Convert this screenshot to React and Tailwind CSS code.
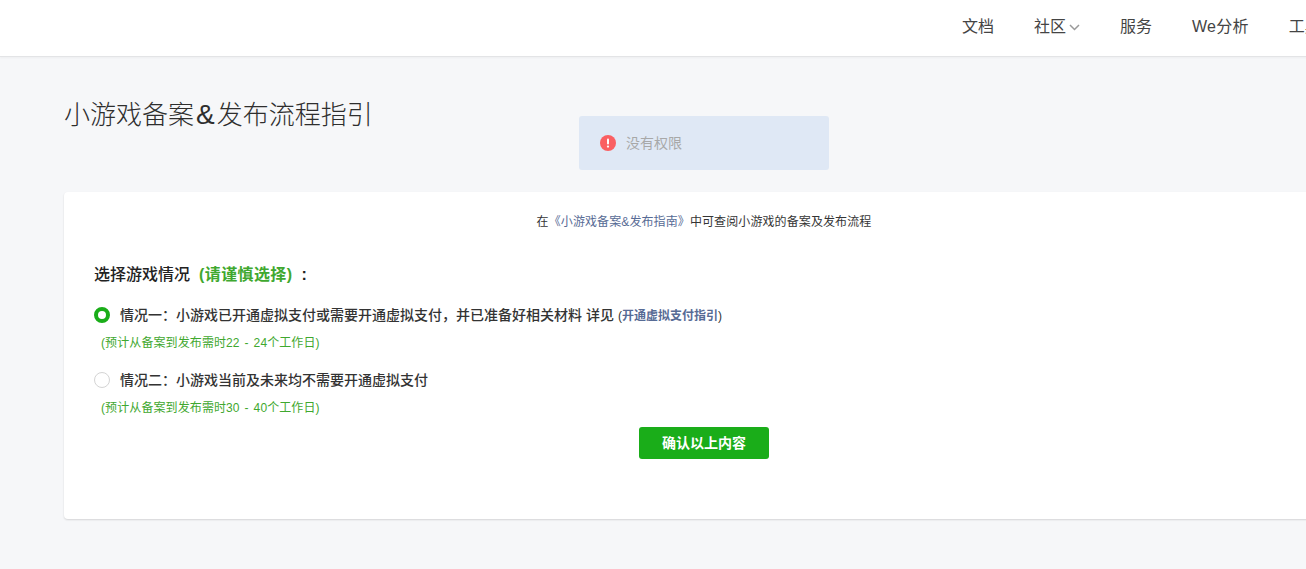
import React from 'react';

const fontStack = "font-['Liberation_Sans','Noto_Sans_CJK_SC',sans-serif]";

const navItems = ['文档', '社区', '服务', 'We分析', '工具'];

const NavBar = () => (
  <header className="h-[57px] bg-white border-b border-[#e3e4e6] shadow-[0_1px_2px_rgba(0,0,0,0.04)]">
    <nav className="flex h-[54px] items-center gap-10 pl-[962px] text-base text-[#444444]">
      {navItems.map((item) => (
        <a
          key={item}
          className={`flex shrink-0 items-center whitespace-nowrap ${item === 'We分析' ? 'tracking-[0.25px]' : ''}`}
        >
          {item}
          {item === '社区' && (
            <svg className="ml-[3px] mt-[1px] w-[11px] h-[7px]" viewBox="0 0 11 7" fill="none">
              <path d="M1 1l4.5 4.5L10 1" stroke="#9a9a9a" strokeWidth="1.5" />
            </svg>
          )}
        </a>
      ))}
    </nav>
  </header>
);

const Option = ({ checked, children, note }) => (
  <div>
    <label className="flex h-5 items-center text-sm font-medium text-[#333333]">
      {checked ? (
        <span className="w-4 h-4 rounded-full border-[4.5px] border-[#1aad19] bg-white" />
      ) : (
        <span className="w-4 h-4 rounded-full border border-[#d4d4d4] bg-white" />
      )}
      <span className="ml-[10px]">{children}</span>
    </label>
    <p className="mt-[10px] ml-[7px] h-[17px] text-xs leading-[17px] tracking-[0.1px] [word-spacing:1.5px] text-[#3fa82f]">
      {note}
    </p>
  </div>
);

export default function App() {
  return (
    <div className={`relative w-[1306px] h-[569px] overflow-hidden bg-[#f6f7f9] ${fontStack}`}>
      <div className="w-[1408px]">
        <NavBar />

        <main className="px-16">
          <h1 className="pt-[40px] h-[135px] text-[26px] leading-[36px] font-light text-[#2e2e2e]">
            小游戏备案<span className="mx-[2px] text-[28px]">&</span>发布流程指引
          </h1>

          <section className="h-[327px] rounded bg-white px-[30px] shadow-[0_1px_2px_rgba(0,0,0,0.14)]">
            <p className="pt-[22px] text-center text-xs leading-[17px] tracking-[0.1px] text-[#353535]">
              在<a className="text-[#576b95]">《小游戏备案&发布指南》</a>中可查阅小游戏的备案及发布流程
            </p>

            <h2 className="mt-[32px] text-base leading-[24px] font-medium text-[#222222]">
              选择游戏情况
              <span className="ml-[9px] font-semibold text-[#3fa82f] tracking-[0.4px]">(请谨慎选择)</span>
              <span className="ml-[9px] font-bold">:</span>
            </h2>

            <div className="mt-[18px] flex flex-col gap-[18px]">
              <Option checked note="(预计从备案到发布需时22 - 24个工作日)">
                情况一：小游戏已开通虚拟支付或需要开通虚拟支付，并已准备好相关材料 详见
                <span className="ml-[4px] text-xs">
                  (<a className="font-semibold text-[#576b95]">开通虚拟支付指引</a>)
                </span>
              </Option>
              <Option note="(预计从备案到发布需时30 - 40个工作日)">
                情况二：小游戏当前及未来均不需要开通虚拟支付
              </Option>
            </div>

            <div className="mt-[10px] flex justify-center">
              <button className="w-[130px] h-8 rounded-[3px] bg-[#1aad19] text-sm font-semibold text-white">
                确认以上内容
              </button>
            </div>
          </section>
        </main>
      </div>

      {/* toast */}
      <div className="absolute left-[579px] top-[116px] flex h-[54px] w-[250px] items-center rounded-[3px] bg-[#dfe8f5] pl-[21px]">
        <svg className="w-4 h-4" viewBox="0 0 16 16">
          <circle cx="8" cy="8" r="8" fill="#fa5f62" />
          <rect x="7" y="3.4" width="2" height="6" rx="1" fill="#fff" />
          <circle cx="8" cy="11.6" r="1.15" fill="#fff" />
        </svg>
        <span className="ml-[10px] text-sm text-[#a8a8a8]">没有权限</span>
      </div>
    </div>
  );
}
